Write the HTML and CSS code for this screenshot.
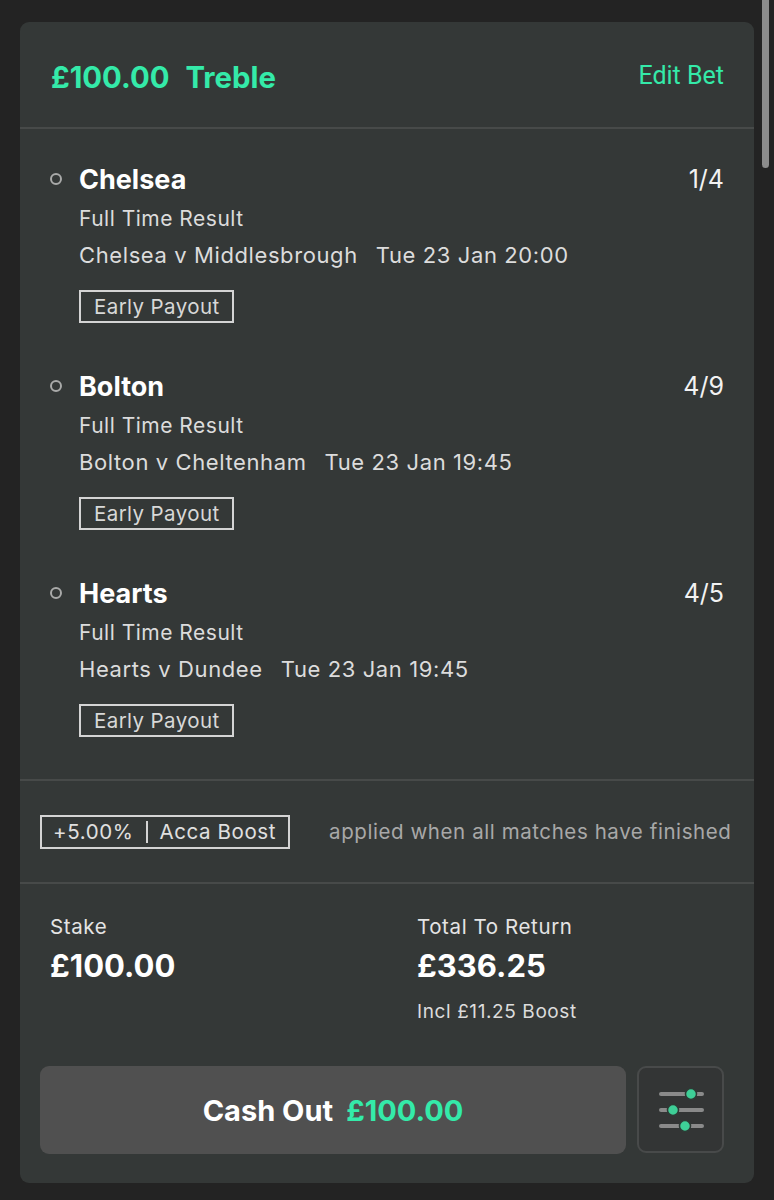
FILE: index.html
```html
<!DOCTYPE html>
<html>
<head>
<meta charset="utf-8">
<link rel="stylesheet" href="styles.css">
</head>
<body>
<div class="page">
  <div class="card">
    <div class="header">
      <div class="title"><span>£100.00</span><span>Treble</span></div>
      <div class="edit">Edit Bet</div>
    </div>
    <div class="list">
      <div class="sel">
        <div class="sel-top">
          <span class="dot"></span>
          <span class="name">Chelsea</span>
          <span class="odds">1/4</span>
        </div>
        <div class="market">Full Time Result</div>
        <div class="match"><span>Chelsea v Middlesbrough</span><span>Tue 23 Jan 20:00</span></div>
        <div class="badge">Early Payout</div>
      </div>
      <div class="sel">
        <div class="sel-top">
          <span class="dot"></span>
          <span class="name">Bolton</span>
          <span class="odds">4/9</span>
        </div>
        <div class="market">Full Time Result</div>
        <div class="match"><span>Bolton v Cheltenham</span><span>Tue 23 Jan 19:45</span></div>
        <div class="badge">Early Payout</div>
      </div>
      <div class="sel">
        <div class="sel-top">
          <span class="dot"></span>
          <span class="name">Hearts</span>
          <span class="odds">4/5</span>
        </div>
        <div class="market">Full Time Result</div>
        <div class="match"><span>Hearts v Dundee</span><span>Tue 23 Jan 19:45</span></div>
        <div class="badge">Early Payout</div>
      </div>
    </div>
    <div class="boost">
      <div class="boost-box"><span class="pct">+5.00%</span><span class="bsep"></span><span>Acca Boost</span></div>
      <div class="boost-note">applied when all matches have finished</div>
    </div>
    <div class="stats">
      <div class="stat">
        <div class="label">Stake</div>
        <div class="amount">£100.00</div>
      </div>
      <div class="stat">
        <div class="label">Total To Return</div>
        <div class="amount">£336.25</div>
        <div class="incl">Incl £11.25 Boost</div>
      </div>
    </div>
    <div class="actions">
      <div class="cashout"><span class="co-label">Cash Out</span><span class="co-value">£100.00</span></div>
      <div class="settings">
        <svg width="46" height="46" viewBox="0 0 46 46">
          <g stroke="#8a8a8a" stroke-width="4" stroke-linecap="round">
            <line x1="3" y1="7" x2="44" y2="7"/>
            <line x1="3" y1="23" x2="44" y2="23"/>
            <line x1="3" y1="39" x2="44" y2="39"/>
          </g>
          <g fill="#3ecf97" stroke="#2e3a35" stroke-width="1.5">
            <circle cx="33" cy="7" r="5.5"/>
            <circle cx="15" cy="23" r="5.5"/>
            <circle cx="27" cy="39" r="5.5"/>
          </g>
        </svg>
      </div>
    </div>
  </div>
  <div class="scrollbar"></div>
</div>
</body>
</html>
```

FILE: styles.css
```css
* { box-sizing: border-box; }
html, body { margin: 0; padding: 0; }
body {
  background: #232323;
  font-family: Inter, "Liberation Sans", sans-serif;
  color: #e6e6e6;
  width: 774px;
  height: 1200px;
  overflow: hidden;
}
.page {
  position: relative;
  padding: 22px 20px 0 20px;
}
.card {
  width: 734px;
  height: 1161px;
  background: #343837;
  border-radius: 9px;
  display: flex;
  flex-direction: column;
}
.header {
  height: 107px;
  display: flex;
  align-items: center;
  justify-content: space-between;
  padding: 0 30px 0 31px;
  border-bottom: 2px solid #474a49;
}
.title {
  display: flex;
  gap: 16px;
  color: #34eaa9;
  font-weight: 700;
  font-size: 29.3px;
  padding-top: 6px;
}
.edit {
  color: #34eaa9;
  font-family: Roboto, Inter, sans-serif;
  font-size: 25px;
  padding-top: 1px;
}
.list {
  padding: 34px 30px 42px 30px;
  border-bottom: 2px solid #474a49;
}
.sel { margin-bottom: 47px; }
.sel:last-child { margin-bottom: 0; }
.sel-top {
  display: flex;
  align-items: center;
  height: 32px;
}
.dot {
  width: 12px;
  height: 12px;
  border: 2px solid #a9aaa9;
  border-radius: 50%;
  margin-left: 0;
  margin-right: 17px;
}
.name {
  font-weight: 700;
  font-size: 27px;
  color: #ffffff;
  flex: 1;
}
.odds {
  font-size: 25px;
  color: #f2f2f2;
}
.market, .match {
  margin-left: 29px;
  line-height: 28px;
  margin-top: 10px;
  font-size: 21px;
  letter-spacing: 0.5px;
  color: #dcdcdc;
}
.match {
  margin-top: 8px;
  font-size: 22px;
  letter-spacing: 0.6px;
  display: flex;
  gap: 18px;
}
.badge {
  margin-left: 29px;
  margin-top: 21px;
  height: 33px;
  display: inline-flex;
  align-items: center;
  padding: 0 12px 0 13px;
  border: 2px solid #d4d4d4;
  font-size: 20.5px;
  letter-spacing: 0.4px;
  color: #d8d8d8;
}
.boost {
  height: 103px;
  display: flex;
  align-items: center;
  padding-left: 20px;
  border-bottom: 2px solid #474a49;
}
.boost-box {
  height: 34px;
  display: flex;
  align-items: center;
  border: 2px solid #d4d4d4;
  padding: 0 12px 0 11px;
  font-size: 20.5px;
  letter-spacing: 0.6px;
  color: #e0e0e0;
}
.bsep {
  width: 2px;
  height: 22px;
  background: #d4d4d4;
  margin: 0 11px 0 13px;
}
.boost-note {
  margin-left: 39px;
  font-size: 20.5px;
  letter-spacing: 0.58px;
  color: #a8a8a8;
}
.stats {
  display: grid;
  grid-template-columns: 367px 1fr;
  padding: 29px 30px 0 30px;
  height: 182px;
}
.label {
  font-size: 20.5px;
  letter-spacing: 0.6px;
  color: #e4e4e4;
  line-height: 28px;
}
.amount {
  margin-top: 7px;
  font-size: 31px;
  font-weight: 700;
  color: #ffffff;
  line-height: 36px;
}
.incl {
  margin-top: 16px;
  font-size: 19px;
  letter-spacing: 0.6px;
  color: #dcdcdc;
  line-height: 24px;
}
.actions {
  display: flex;
  gap: 11px;
  padding: 0 30px 0 20px;
}
.cashout {
  width: 586px;
  height: 88px;
  background: #505050;
  border-radius: 9px;
  display: flex;
  align-items: center;
  justify-content: center;
  gap: 13px;
  font-size: 29px;
  font-weight: 700;
}
.co-label { color: #ffffff; }
.co-value { color: #34eaa9; }
.settings {
  width: 87px;
  height: 87px;
  border: 2px solid #484a4a;
  border-radius: 9px;
  background: #333535;
  display: flex;
  align-items: center;
  justify-content: center;
}
.scrollbar {
  position: absolute;
  top: 0;
  left: 762px;
  width: 7px;
  height: 168px;
  background: #8c8c8c;
  border-radius: 0 0 4px 4px;
}
```
